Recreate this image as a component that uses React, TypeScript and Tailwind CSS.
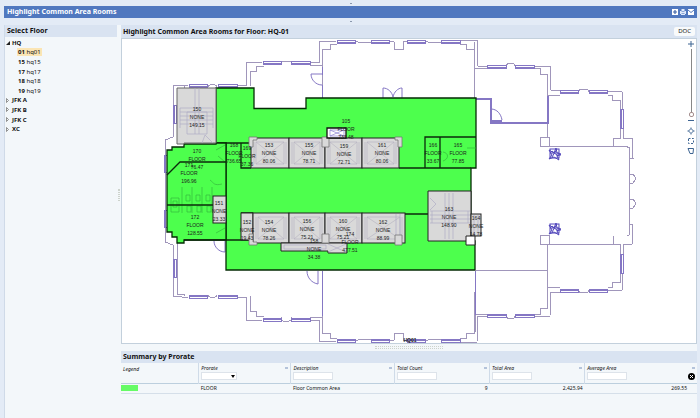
import type { ReactNode } from 'react';

const floors = [
  { id: '01', name: 'hq01' },
  { id: '15', name: 'hq15' },
  { id: '17', name: 'hq17' },
  { id: '18', name: 'hq18' },
  { id: '19', name: 'hq19' },
];
const sites = ['JFK A', 'JFK B', 'JFK C', 'XC'];

const WALL = '#a096bb';
const GLASS = '#8577c4';
const GREEN = '#4dff4d';

/* Room labels: centre x, first baseline y, then the lines from top to bottom. */
const labels: { x: number; y: number; lines: string[] }[] = [
  { x: 197, y: 111, lines: ['150', 'NONE', '149.15'] },
  { x: 197, y: 153, lines: ['170', 'FLOOR', '76.47'] },
  { x: 189, y: 167, lines: ['171', 'FLOOR', '196.96'] },
  { x: 195, y: 219, lines: ['172', 'FLOOR', '128.55'] },
  { x: 234, y: 147, lines: ['168', 'FLOOR', '736.65'] },
  { x: 247, y: 150, lines: ['169', 'FLOOR', '37.36'] },
  { x: 269, y: 147, lines: ['153', 'NONE', '80.06'] },
  { x: 309, y: 147, lines: ['155', 'NONE', '78.71'] },
  { x: 344, y: 148, lines: ['159', 'NONE', '72.71'] },
  { x: 382, y: 147, lines: ['161', 'NONE', '80.06'] },
  { x: 346, y: 123, lines: ['105', 'FLOOR', '735.48'] },
  { x: 433, y: 147, lines: ['166', 'FLOOR', '33.67'] },
  { x: 458, y: 147, lines: ['165', 'FLOOR', '77.85'] },
  { x: 219, y: 205, lines: ['151', 'NONE', '23.33'] },
  { x: 247, y: 224, lines: ['152', 'NONE', '19.43'] },
  { x: 269, y: 224, lines: ['154', 'NONE', '78.26'] },
  { x: 307, y: 223, lines: ['156', 'NONE', '75.21'] },
  { x: 343, y: 223, lines: ['160', 'NONE', '75.21'] },
  { x: 383, y: 224, lines: ['162', 'NONE', '88.99'] },
  { x: 314, y: 243, lines: ['158', 'NONE', '34.38'] },
  { x: 350, y: 236, lines: ['174', 'FLOOR', '477.51'] },
  { x: 449, y: 211, lines: ['163', 'NONE', '148.90'] },
  { x: 476, y: 220, lines: ['164', 'NONE', '14.78'] },
];

const lifts = [
  { x: 251, y: 138, w: 38, h: 30 },
  { x: 289, y: 138, w: 36, h: 30 },
  { x: 325, y: 138, w: 37, h: 30 },
  { x: 362, y: 138, w: 37, h: 30 },
  { x: 253, y: 213, w: 36, h: 30 },
  { x: 289, y: 213, w: 36, h: 30 },
  { x: 325, y: 213, w: 37, h: 30 },
  { x: 362, y: 213, w: 43, h: 30 },
];

function Pane({ x, y, w }: { x: number; y: number; w: number }) {
  return (
    <g stroke={GLASS}>
      <rect x={x} y={y} width={w} height={3} />
      <path d={`M${x} ${y + 2}h${w}`} />
    </g>
  );
}

function PaneUpright({ x, y, h }: { x: number; y: number; h: number }) {
  return (
    <g stroke={GLASS}>
      <rect x={x} y={y} width={3} height={h} />
      <path d={`M${x + 1} ${y}v${h}`} />
    </g>
  );
}

/* Outer wall of the north half; the south half is the same wall turned over. */
function HalfWall() {
  return (
    <g>
      <path d="M165 191v-51l8-3V86l9-1h6M208 87c0-3 9-3 9 0M238 85h8V62h16M281 65v-3l2-1h6l2 1v3M310 62h9V41h17M355 41l6 2 10-1M389 41l5 1v7h9v-7l4-1M425 41l6 2 10-1M460 40h17l1 26h9M506 66c1-4 9-4 9 0M534 66h16l1 24h9M578 92c1-4 11-4 11 0M608 92l7-1 7 1v17M623 128v10h9l1 20h-3l-1-11h-2" />
      <path d="M177 143V88h7v-2M250 86V71h6v-5h8M310 65h12V49h8v-5h7M474 90V49h-8v-5h-6M487 68h-13M535 68h5v6h7v64M560 95h-12M608 95h4v5h8v38h-7v8" />
      <Pane x={189} y={84} w={18} />
      <Pane x={218} y={84} w={19} />
      <Pane x={263} y={61} w={18} />
      <Pane x={291} y={61} w={19} />
      <Pane x={337} y={40} w={18} />
      <Pane x={371} y={40} w={18} />
      <Pane x={407} y={40} w={18} />
      <Pane x={441} y={40} w={19} />
      <Pane x={487} y={65} w={19} />
      <Pane x={515} y={65} w={19} />
      <Pane x={560} y={90} w={18} />
      <Pane x={589} y={90} w={18} />
      <PaneUpright x={173} y={105} h={18} />
      <PaneUpright x={164} y={155} h={17} />
      <PaneUpright x={620} y={109} h={19} />
      <path d="M629 174h4l2 3v3l-2 3h-4M629 158v33" />
    </g>
  );
}

function Lift({ x, y, w, h }: { x: number; y: number; w: number; h: number }) {
  return (
    <g>
      <rect x={x} y={y} width={w} height={h} fill="#d9d9d9" stroke="#222" />
      <path
        d={`M${x + 5} ${y + 4}h${w - 10}v${h - 8}h${10 - w}zl${w - 10} ${h - 8}M${x + w - 5} ${y + 4}l${10 - w} ${h - 8}M${x + 3} ${y + 4}v${h - 8}M${x + w - 3} ${y + 4}v${h - 8}`}
        fill="none"
        stroke="#b3b0c0"
        strokeWidth={0.6}
      />
    </g>
  );
}

function Plant({ x, y }: { x: number; y: number }) {
  return (
    <g stroke="#5247bb">
      <rect x={x} y={y} width={9} height={9} />
      <path d={`M${x - 1} ${y + 1}l5 3 2-5 1 5 4 1-4 2 2 4-5-3-5 2 3-4zM${x} ${y + 4}h9M${x + 2} ${y + 8}l5-8M${x + 6} ${y + 6}h5M${x + 2} ${y + 2}l6 5`} />
    </g>
  );
}

function FloorPlan() {
  return (
    <svg viewBox="122 39 574 304" className="block h-auto w-full" role="img" aria-label="HQ-01">
      <g fill="none" stroke={WALL}>
        <g shapeRendering="crispEdges">
          <HalfWall />
          <g transform="translate(0 382) scale(1 -1)">
            <HalfWall />
          </g>
          <path d="M549 146h64h14v1M549 244h64M540 137h9v9h-9zM540 235h9v9h-9zM476 270h71M547 138v-2M547 245v20" />
          <path d="M322 49v49M322 271v61M474 42v56M475 271v61" />
          <g stroke={GLASS} strokeWidth={2}>
            <path d="M322 67v8M322 85v13M322 271v45M475 271v44" strokeWidth={1} />
            <path d="M476 99h15v24h57V96M491 121h11" />
          </g>
        </g>
        <g stroke={GLASS}>
          <path d="M322 74h-11c0 6 5 11 11 11M383 98V88c5 0 9 4 10 9 1-5 5-9 9-9v10M491 109c6 0 10 5 11 11M214 241c0 6 5 11 11 11v-11M307 271c0 7 5 12 11 13v-13" />
        </g>
        <Plant x={550} y={149} />
        <Plant x={550} y={224} />
      </g>

      {/* Common area, then the partitions drawn over it */}
      <g fill={GREEN} stroke="#052b05" strokeWidth={1.3}>
        <path d="M216 88h38v20.500h52V98h170v70h-5v73h4v29H226V143h-10z" />
        <path d="M167 150h5v-3h12v-3h32v-1h10v97h-42v3h-7v-6h-5v-5h-5z" />
      </g>
      <g fill="none" stroke="#35b83c" strokeWidth={0.7}>
        <path d="M182 187v26M192 187v26M202 187v26M212 187v22M171 198h8v14h-8zM173 201h4v6h-4zM186 195h4v6h-4zM196 195h4v6h-4zM206 195h4v6h-4zM187 206h4v6h-4zM197 206h4v6h-4zM207 206h4v6h-4zM216 150l9-5M216 233l9-5M218 156l7 6M467 148h9M443 152c6 1 6 7 0 9M210 180c4 3 4 6 12 4" />
      </g>
      <g fill="none" stroke="#0b2a0b" strokeWidth={1.3}>
        <path d="M167 175l13-13h46M167 205h46M226 143h23M241 143v25h10M399 168h72M425 168v-31h51M440 137v31M405 214h23M184 240h65M241 213h12" />
      </g>

      {/* Stairs, lifts and shafts */}
      <g fill="#d9d9d9" stroke="#222">
        <path d="M177 88h39v55h-32v1h-7z" stroke="#666" />
        <rect x={213} y={196} width={13} height={27} />
        <rect x={241} y={213} width={12} height={27} />
        <path d="M428 191h43v50h-43z" />
        <rect x={471} y={214} width={10} height={22} />
      </g>
      <g fill="none" stroke="#b0adc6" strokeWidth={0.7}>
        <path d="M180 108h33M180 112h33M180 116h33M180 120h33M180 124h33M180 108v20M213 108v20M187 112h20v22h-20zM195 88v46M199 88v46M202 143l3-8 8 8" />
        <path d="M430 211h40M430 215h40M430 219h40M430 223h40M445 193v46M449 193v46M453 193v46M432 211v12M468 211v12M430 198l6 6-6 6M474 215v20M478 215v20" />
      </g>
      {lifts.map((l) => (
        <Lift key={`${l.x}-${l.y}`} {...l} />
      ))}
      <path d="M281 243h66v10h-19v-2h-47z" fill="#d9d9d9" stroke="#222" />
      <path d="M284 245h42v4h-42zM328 244l18 8M346 244l-18 8M396 214v26M400 214v26" fill="none" stroke="#b0adc6" strokeWidth={0.7} />
      <g fill="#d9d9d9" stroke="#777" strokeWidth={0.8}>
        <path d="M249 137h8v3h-4v7h-4zM322 137h7v10h-7zM395 137h7v10h-4v-7h-3zM249 234h4v8h4v3h-8zM322 234h7v9h-7zM395 235h7v10h-7z" />
      </g>
      <path d="M327 128h19v10h-19z" fill="#fff" stroke="#111" strokeWidth={1.3} />
      <path d="M330 130h14v6h-14zl14 6M344 130l-14 6" fill="none" stroke="#8a7fd0" strokeWidth={0.7} />
      <path d="M466 236h9v9h-9z" fill="#fff" stroke="#222" />

      <g textAnchor="middle" fill="#1c1c1c" className="font-['Liberation_Sans',sans-serif] text-[5px]">
        {labels.map(({ x, y, lines }) =>
          lines.map((line, i) => (
            <text key={`${x}-${y}-${line}`} x={x} y={y + i * 8}>
              {line}
            </text>
          )),
        )}
        <text x={410} y={342} className="font-bold">
          HQ01
        </text>
      </g>
    </svg>
  );
}

function PanelHeader({ title, children }: { title: string; children?: ReactNode }) {
  return (
    <div className="flex min-h-3 items-center justify-between bg-[#d9e3f1] px-0.5">
      <h2 className="text-[7px] leading-3 font-bold whitespace-nowrap">{title}</h2>
      {children}
    </div>
  );
}

function Tool({ label, children }: { label: string; children: ReactNode }) {
  return (
    <button type="button" aria-label={label} className="flex h-2.5 w-2.5 items-center justify-center text-[#3d6492]">
      <svg viewBox="0 0 8 8" className="size-2" fill="none" stroke="currentColor">
        {children}
      </svg>
    </button>
  );
}

function FloorTree() {
  return (
    <ul className="grid h-[97px] auto-rows-fr pt-px text-[6px] leading-2 text-[#111]">
      <li className="flex items-center gap-0.5 px-px">
        <svg viewBox="0 0 4 4" className="size-1">
          <path d="M4 0v4H0z" fill="#222" />
        </svg>
        <b>HQ</b>
      </li>
      {floors.map((floor, i) => (
        <li key={floor.id} className="flex items-center pl-3">
          <button type="button" className={i === 0 ? 'bg-[#fbe5b4] px-px' : 'px-px'}>
            <b>{floor.id}</b> {floor.name}
          </button>
        </li>
      ))}
      {sites.map((site) => (
        <li key={site} className="flex items-center gap-0.5 px-px">
          <svg viewBox="0 0 4 5" className="h-[5px] w-1" fill="none" stroke="#777" strokeWidth={0.8}>
            <path d="M.5 .5l2 2-2 2z" />
          </svg>
          <b>{site}</b>
        </li>
      ))}
    </ul>
  );
}

const columns = ['Prorate', 'Description', 'Total Count', 'Total Area', 'Average Area'];

function SummaryTable() {
  return (
    <table className="w-full table-fixed border-collapse text-[5px] leading-2 text-[#111]">
      <colgroup>
        <col className="w-[13.5%]" />
        <col className="w-[16%]" />
        <col className="w-[18%]" />
        <col className="w-[16.5%]" />
        <col className="w-[16.5%]" />
        <col className="w-[19.5%]" />
      </colgroup>
      <thead>
        <tr className="h-5 border-b border-[#bccfde] text-left align-top italic">
          <th className="px-0.5 pt-0.5 font-normal">Legend</th>
          {columns.map((column, i) => (
            <th key={column} className="border-l border-[#cfdbe8] px-0.5 pt-px font-normal">
              <div className="flex items-center justify-between">
                <label htmlFor={column}>{column}</label>
                <span className="h-0.5 w-[3px] bg-[#b4c3da]" />
              </div>
              <div className="flex items-center justify-between">
                {i === 0 ? (
                  <div className="relative flex">
                    <select id={column} className="h-2 w-9 appearance-none border border-[#dde3ea] bg-white" defaultValue="">
                      <option value="" />
                    </select>
                    <svg viewBox="0 0 4 3" className="pointer-events-none absolute top-[3px] right-0.5 h-[3px] w-1">
                      <path d="M0 0h4L2 3z" fill="#000" />
                    </svg>
                  </div>
                ) : (
                  <input id={column} type="text" className="h-2 w-10 border border-[#dde3ea] bg-white" />
                )}
                {i === columns.length - 1 && (
                  <button type="button" aria-label="Clear filters">
                    <svg viewBox="0 0 7 7" className="size-[7px]">
                      <circle cx="3.500" cy="3.500" r="3.500" fill="#000" />
                      <path d="M2 2l3 3M5 2L2 5" stroke="#fff" />
                    </svg>
                  </button>
                )}
              </div>
            </th>
          ))}
        </tr>
      </thead>
      <tbody>
        <tr className="h-2.5 border-b border-[#d5dfe9]">
          <td>
            <span className="block h-1.5 w-[17px] bg-[#66fb66]" />
          </td>
          <td className="px-0.5">FLOOR</td>
          <td className="px-0.5">Floor Common Area</td>
          <td className="px-0.5 text-right">9</td>
          <td className="px-0.5 text-right">2,425.94</td>
          <td className="pr-2.5 text-right">269.55</td>
        </tr>
      </tbody>
    </table>
  );
}

function Dots() {
  return <div className="mx-auto h-[3px] w-[68px] border-y border-dotted border-[#cdd3cc]" />;
}

function Notch() {
  return <span className="h-px w-0.5 bg-[#8a98ad]" />;
}

export default function App() {
  return (
    <div className="flex min-h-screen flex-col bg-[#e3ebf6] pr-[3px] pl-1 font-['Noto_Sans','Open_Sans',sans-serif] text-[#111]">
      <div className="flex h-1.5 items-center justify-center">
        <Notch />
      </div>
      <header className="flex h-3 items-center justify-between bg-[#5078bf] px-[3px] text-white">
        <h1 className="text-[7px] leading-3 font-bold">Highlight Common Area Rooms</h1>
        <div className="flex gap-0.5">
          <button type="button" aria-label="Add to favorites">
            <svg viewBox="0 0 6 6" className="size-1.5">
              <path d="M0 0h6v6H0z" fill="#fff" />
              <path d="M3 1v4M1 3h4" stroke="#3f64a8" strokeWidth="1.200" />
            </svg>
          </button>
          <button type="button" aria-label="Print">
            <svg viewBox="0 0 6 6" className="size-1.5">
              <path d="M1.500 0h3v2H6v3H5v1H1V5H0V2h1.500z" fill="#dfe9fa" />
              <path d="M1.500 2.500h3M1.500 4.500h3" stroke="#5078bf" strokeWidth=".6" />
            </svg>
          </button>
          <button type="button" aria-label="Send by e-mail">
            <svg viewBox="0 0 6 6" className="size-1.5">
              <path d="M0 0h6v6H0z" fill="#fff" />
              <path d="M0 1l3 2.500L6 1" fill="none" stroke="#5078bf" />
            </svg>
          </button>
        </div>
      </header>
      <div className="flex h-[7px] items-center justify-center">
        <Notch />
      </div>

      <div className="flex flex-1 bg-[#f3f7fa]">
        <aside className="w-[113px] shrink-0 border-l border-[#cfdae8]">
          <PanelHeader title="Select Floor" />
          <FloorTree />
        </aside>
        <div className="flex w-1 shrink-0 flex-col items-center pt-[164px]">
          <div className="h-3 w-0.5 border-x border-dotted border-[#cdd3cc]" />
        </div>
        <main className="min-w-0 flex-1">
          <PanelHeader title="Highlight Common Area Rooms for Floor: HQ-01">
            <button type="button" className="my-0.5 rounded-xs bg-[#f8fafb] px-1 text-[6px] leading-[9px] text-[#222]">
              DOC
            </button>
          </PanelHeader>
          <section className="relative border border-[#c3d0dc] bg-white">
            <FloorPlan />
            <div className="absolute top-0 right-0 flex w-2.5 flex-col items-center">
              <Tool label="Zoom in">
                <path d="M4 1v6M1 4h6" />
              </Tool>
              <input
                type="range"
                aria-label="Zoom"
                defaultValue={0}
                className="h-[68px] w-[5px] appearance-none bg-transparent [direction:rtl] [writing-mode:vertical-lr] [&::-webkit-slider-runnable-track]:w-px [&::-webkit-slider-runnable-track]:bg-[#888] [&::-webkit-slider-thumb]:-ml-0.5 [&::-webkit-slider-thumb]:size-[5px] [&::-webkit-slider-thumb]:appearance-none [&::-webkit-slider-thumb]:rounded-xs [&::-webkit-slider-thumb]:border [&::-webkit-slider-thumb]:border-[#a58f8f] [&::-webkit-slider-thumb]:bg-white"
              />
              <button type="button" aria-label="Zoom out" className="flex h-[9px] w-2.5 items-start justify-center pt-[3px]">
                <span className="h-px w-1.5 bg-[#3d6492]" />
              </button>
              <Tool label="Zoom extents">
                <path d="M4 1.500L6.500 4 4 6.500 1.500 4zM4 .5v1M4 6.500v1M.5 4h1M6.500 4h1" />
              </Tool>
              <Tool label="Zoom window">
                <path d="M1.500 1.500h5v5h-5z" strokeDasharray="2 1.500" />
              </Tool>
              <Tool label="Pan">
                <path d="M1 1.500h5.500l-.5 5H3z" />
              </Tool>
            </div>
          </section>
          <div className="flex h-[7px] items-center">
            <Dots />
          </div>
          <PanelHeader title="Summary by Prorate" />
          <SummaryTable />
        </main>
      </div>
    </div>
  );
}
